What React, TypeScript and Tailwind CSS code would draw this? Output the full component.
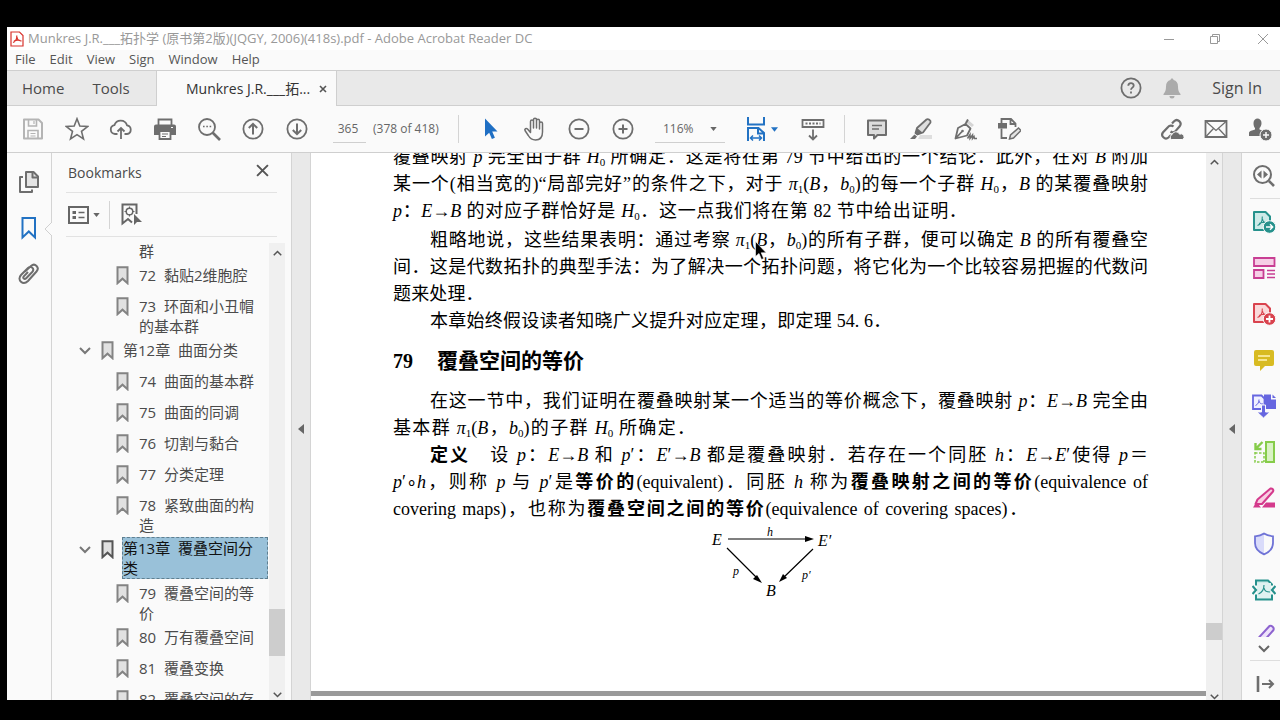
import React from 'react';

type IconProps = {
  children: React.ReactNode;
  className?: string;
};

const Icon = ({ children, className = 'size-6 text-[#6e6e6e]' }: IconProps) => (
  <svg viewBox="0 0 24 24" fill="none" stroke="currentColor" strokeWidth="2" className={`shrink-0 ${className}`} aria-hidden="true">
    {children}
  </svg>
);

const fileTools = [
  {
    label: 'Save file',
    icon: (
      <Icon className="size-6 text-[#b4b4b4]">
        <path d="M3 2.5h14.5L21 6v15.5H3z" strokeLinejoin="round" />
        <path d="M7.5 3v6h8V3M7 21v-7.5h10V21" strokeWidth="1.6" />
        <path d="M13 4v3M9.5 16.5h5M9.5 19h5" strokeWidth="1.2" />
      </Icon>
    ),
  },
  {
    label: 'Star file',
    icon: (
      <Icon>
        <path d="M12 1.8l2.8 7.3 7.8.4-6.1 4.9 2 7.6L12 17.7 5.5 22l2-7.6L1.4 9.5l7.8-.4z" strokeWidth="1.6" />
      </Icon>
    ),
  },
  {
    label: 'Upload',
    icon: (
      <Icon>
        <path d="M8.5 17H6a4.5 4.5 0 0 1-.6-8.9A6.6 6.6 0 0 1 18 8.3 4.4 4.4 0 0 1 18 17h-2.5" strokeWidth="1.8" />
        <path d="M12 22V11M8.500 14.500 12 11l3.500 3.500" strokeWidth="1.8" />
      </Icon>
    ),
  },
  {
    label: 'Print',
    icon: (
      <Icon>
        <path d="M5.500 8V2.500h13V8" strokeWidth="1.8" />
        <path d="M3 7.500h18A2 2 0 0 1 23 9.500V18h-5v-4H6v4H1V9.500A2 2 0 0 1 3 7.500z" fill="currentColor" stroke="none" />
        <path d="M6.500 14h11v8h-11z" strokeWidth="1.8" />
        <path d="M9 17h6M9 19.500h4" strokeWidth="1.2" />
        <path d="M18 10.500h2" stroke="#fafafa" strokeWidth="1.2" />
      </Icon>
    ),
  },
  {
    label: 'Find text',
    icon: (
      <Icon>
        <circle cx="10" cy="10" r="8" strokeWidth="1.8" />
        <path d="M15.500 15.500 23 23" strokeWidth="2.6" />
        <path d="M6 9.500h1.600M9.300 9.500h1.600M12.600 9.500h1.600" strokeWidth="1.6" />
      </Icon>
    ),
  },
  {
    label: 'Previous page',
    icon: (
      <Icon>
        <circle cx="12" cy="12" r="9.6" strokeWidth="1.8" />
        <path d="M12 17.500V7M7.800 11 12 6.800l4.200 4.200" />
      </Icon>
    ),
  },
  {
    label: 'Next page',
    icon: (
      <Icon>
        <circle cx="12" cy="12" r="9.6" strokeWidth="1.8" />
        <path d="M12 6.500V17M7.800 13l4.200 4.200 4.200-4.200" />
      </Icon>
    ),
  },
];

const viewTools = [
  {
    label: 'Select',
    icon: (
      <Icon className="size-6 text-[#1f6fc4]">
        <path d="M6 1.500v18l4.200-3.800 2.700 6.300 3-1.300-2.700-6.100h5.300z" fill="currentColor" stroke="none" />
      </Icon>
    ),
  },
  {
    label: 'Pan',
    icon: (
      <Icon>
        <path
          d="M7.500 13V4.500a1.500 1.500 0 0 1 3 0V11 2.700a1.500 1.500 0 0 1 3 0V11 3.700a1.500 1.500 0 0 1 3 0V12 6.500a1.500 1.500 0 0 1 3 0V15c0 5-2.500 8-7 8-3.500 0-5.500-1.500-7.200-4.500L2 13.500c-.8-1.500 1.300-2.700 2.500-1.500l3 3.500z"
          strokeWidth="1.5"
          strokeLinejoin="round"
        />
      </Icon>
    ),
  },
  {
    label: 'Zoom out',
    icon: (
      <Icon>
        <circle cx="12" cy="12" r="9.6" strokeWidth="1.8" />
        <path d="M7.500 12h9" />
      </Icon>
    ),
  },
  {
    label: 'Zoom in',
    icon: (
      <Icon>
        <circle cx="12" cy="12" r="9.6" strokeWidth="1.8" />
        <path d="M7.500 12h9M12 7.500v9" />
      </Icon>
    ),
  },
];

const commentTools = [
  {
    label: 'Add comment',
    icon: (
      <Icon>
        <path d="M3 3.500h18V18h-8.500L9 21.500V18H3z" fill="#dcdcdc" strokeLinejoin="round" />
        <path d="M7 8.500h10M7 12h7" strokeWidth="1.5" />
      </Icon>
    ),
  },
  {
    label: 'Highlight',
    icon: (
      <Icon>
        <path d="M11 18h12v4H9z" fill="#dedede" stroke="none" />
        <path d="M17.500 2.500c1.500-1.200 4.700 1 4 3L14 15.500l-5.500 2-2-1.500 1.500-5z" fill="#dedede" strokeLinejoin="round" strokeWidth="1.8" />
        <path d="M8 11l5.500 4.500-5 2.500-2-1.500z" fill="currentColor" stroke="none" />
        <path d="M5.500 17.500 1 22h5l2-2.500z" fill="currentColor" stroke="none" />
      </Icon>
    ),
  },
  {
    label: 'Sign document',
    icon: (
      <Icon>
        <path d="m14 2 7 6-2 2-7-5z" fill="#d5d5d5" stroke="none" />
        <path d="M2.500 21.500 5 11l7.500-4 5 4.500-3.500 7z M2.500 21.500l6.500-7 M12.500 7 15 2.500" strokeWidth="1.8" strokeLinejoin="round" />
        <circle cx="9.5" cy="14" r="1.3" fill="currentColor" stroke="none" />
        <path d="m14.500 21.500 2.500-4v4l2.500-3.500v3.500l1.500-2 .5 2H24" strokeWidth="1.5" />
      </Icon>
    ),
  },
  {
    label: 'Edit PDF',
    icon: (
      <Icon>
        <path d="M1 6h9v5.500H1z" fill="currentColor" stroke="none" />
        <path d="M4.500 6V2H14l4.500 4.500V10M13.500 2v5h5M4.500 11.500V21H10" strokeWidth="1.8" />
        <path d="m12.500 22 1-4 8-7 2.500 2.500-7.500 7.500z" strokeWidth="1.5" fill="#e3e3e3" />
      </Icon>
    ),
  },
];

const shareTools = [
  {
    label: 'Share link',
    icon: (
      <Icon>
        <path
          d="M10.500 14.500a3.800 3.800 0 0 0 5.200-.6l4-4.600a3.800 3.800 0 0 0-5.600-5.100L12 6.500M13.500 9.500a3.800 3.800 0 0 0-5.400.4l-5 5.300A3.800 3.800 0 0 0 8.500 20.500l2.500-2.500"
          strokeWidth="2.2"
        />
        <path d="M11.500 22.500a2.800 2.800 0 0 1 .6-5 4 4 0 0 1 7.500-.3 2.700 2.700 0 0 1 2.900 5.300z" fill="currentColor" stroke="#fafafa" strokeWidth="1" />
      </Icon>
    ),
  },
  {
    label: 'Send by email',
    icon: (
      <Icon>
        <path d="M1.500 4h21v16h-21z" strokeWidth="1.8" />
        <path d="m2 4.500 10 9 10-9M2 19.500l7.500-8M22 19.500l-7.500-8" strokeWidth="1.3" />
      </Icon>
    ),
  },
  {
    label: 'Add people',
    icon: (
      <Icon>
        <path d="M5.500 6c0-6 8-6 8 0 0 2.500-1 4-2 5v1.500c3 1 4.500 1.700 5 3V19H1v-3.500c.5-1.500 3-2 6-3V11c-1-1-1.500-2.500-1.500-5z" fill="currentColor" stroke="none" />
        <circle cx="18" cy="18" r="6" fill="currentColor" stroke="#fafafa" strokeWidth="1" />
        <path d="M15 18h6M18 15v6" stroke="#fafafa" strokeWidth="1.5" />
      </Icon>
    ),
  },
];

const Acrobat = () => <path d="M5.500 15.500c3-1 5-4 4.800-9M10.500 9c.5 3 2.500 4.500 6 4.300M7 13.500c3-1.300 5-1.500 7.500-1" strokeWidth="1.1" />;

const sideTools = [
  {
    label: 'Export PDF',
    icon: (
      <Icon className="size-6 text-[#26918c]">
        <path d="M2 2h11.500L18 6.500V20H2z" fill="#cdeae8" strokeLinejoin="round" />
        <Acrobat />
        <circle cx="17.5" cy="17" r="6.3" fill="currentColor" stroke="#fafafa" strokeWidth="1" />
        <path d="M14 17h6.500M18 14.300l2.700 2.700-2.700 2.700" stroke="#fff" strokeWidth="1.4" />
      </Icon>
    ),
  },
  {
    label: 'Organize Pages',
    icon: (
      <Icon className="size-6 text-[#c83e93]">
        <path d="M2 2h20.500v8H2zM2 14h9.500v8H2z" fill="#f6cfe6" strokeWidth="1.8" />
        <path d="M15 14.500h8M15 18h8M15 21.500h8" strokeWidth="1.5" />
      </Icon>
    ),
  },
  {
    label: 'Create PDF',
    icon: (
      <Icon className="size-6 text-[#d9434e]">
        <path d="M2 2h11.500L18 6.500V20H2z" fill="#fad9da" strokeLinejoin="round" />
        <Acrobat />
        <circle cx="17.5" cy="17" r="6.3" fill="currentColor" stroke="#fafafa" strokeWidth="1" />
        <path d="M14 17h7M17.500 13.500v7" stroke="#fff" strokeWidth="1.8" />
      </Icon>
    ),
  },
  {
    label: 'Comment',
    icon: (
      <Icon className="size-6 text-[#d8bb22]">
        <path d="M2 4a2 2 0 0 1 2-2h16a2 2 0 0 1 2 2v12a2 2 0 0 1-2 2h-7l-5 5v-5H4a2 2 0 0 1-2-2z" fill="currentColor" stroke="none" />
        <path d="M6 8h12M6 12h9" stroke="#fff5b8" strokeWidth="1.6" />
      </Icon>
    ),
  },
  {
    label: 'Combine Files',
    icon: (
      <Icon className="size-6 text-[#6666e0]">
        <path d="M12 .5h7v5h5V15H12z" fill="currentColor" stroke="none" />
        <path d="M20.500.5 24 4h-3.500z" fill="currentColor" stroke="none" />
        <path d="M1 1.500h8.500L12.500 4.500V15H1z" fill="#f0f0ff" strokeWidth="1.8" />
        <path d="M3.500 11.500c2.500-1 3.500-3.500 3.500-6M7 7c.5 2 1.500 3 4 3" strokeWidth="1" />
        <path d="M9.500 11h4v7h4.500L11.500 24 5 18h4.500z" fill="currentColor" stroke="#fafafa" strokeWidth="1" />
      </Icon>
    ),
  },
  {
    label: 'Compress pages',
    icon: (
      <Icon className="size-6 text-[#86cc4a]">
        <path d="M14 2h8v20h-8z" fill="#d9f2c4" />
        <path d="M10.500 2 4 8.500M3.500 3v6h6" strokeWidth="2.4" />
        <path d="M3 12v10h9M3 13h9V22" strokeDasharray="2.5 1.5" strokeWidth="1.5" />
      </Icon>
    ),
  },
  {
    label: 'Redact',
    icon: (
      <Icon className="size-6 text-[#d43a8c]">
        <path d="M18.500 2.500c1.800-.5 3.500 1.500 2.500 3L10 18H3.500l2-4.500z" fill="#f9cfe3" strokeLinejoin="round" />
        <path d="M1 21.500 4.500 16l4.500 5.500zM10 21.500 14 16.500h9v5z" fill="currentColor" stroke="none" />
      </Icon>
    ),
  },
  {
    label: 'Protect',
    icon: (
      <Icon className="size-6 text-[#6f73d6]">
        <path d="M12 2v20C6 19.500 3 16.500 3 11V4.500z" fill="#d9dbfa" stroke="none" />
        <path d="M12 1.500c2.500 1.800 5.500 2.500 9 2.800V11c0 5.500-3.500 9-9 11.300C6.500 20 3 16.500 3 11V4.300c3.500-.3 6.500-1 9-2.800z" strokeWidth="1.8" />
      </Icon>
    ),
  },
  {
    label: 'Optimize PDF',
    icon: (
      <Icon className="size-6 text-[#26918c]">
        <path d="M4 7.500V2.500h12l4 4v1M4 16.500v5h16v-5" fill="#cdeae8" />
        <path d="M5 5h14v15H5z" fill="#dff1f0" stroke="none" />
        <path d="M6.500 16c3.500-1.500 5.500-4.500 5.500-9M12 10c.5 3 2.500 4 6 4" strokeWidth="1.2" />
        <path d="m.5 8 3.500 4-3.500 4M23.500 8 20 12l3.500 4" strokeWidth="2.2" />
      </Icon>
    ),
  },
  {
    label: 'Fill and Sign',
    icon: (
      <Icon className="size-6 text-[#8d63cf]">
        <path d="M17.500 2c2-.8 5 1.500 4 4L10 19l-6 2 2-6.500z" fill="#eee2fb" strokeLinejoin="round" />
      </Icon>
    ),
  },
];

const bookmarks = [
  { title: '72\u00a0 黏贴2维胞腔' },
  { title: '73\u00a0 环面和小丑帽的基本群' },
  { title: '第12章\u00a0 曲面分类', chapter: true },
  { title: '74\u00a0 曲面的基本群' },
  { title: '75\u00a0 曲面的同调' },
  { title: '76\u00a0 切割与黏合' },
  { title: '77\u00a0 分类定理' },
  { title: '78\u00a0 紧致曲面的构造' },
  { title: '第13章\u00a0 覆叠空间分类', chapter: true, selected: true },
  { title: '79\u00a0 覆叠空间的等价' },
  { title: '80\u00a0 万有覆叠空间' },
  { title: '81\u00a0 覆叠变换' },
  { title: '82\u00a0 覆叠空间的存在性' },
];

const ToolButton = ({ label, children }: { label: string; children: React.ReactNode }) => (
  <button type="button" aria-label={label} className="flex h-full w-11 items-center justify-center">
    {children}
  </button>
);

const Caret = ({ className }: { className: string }) => (
  <svg viewBox="0 0 8 5" fill="currentColor" className={className} aria-hidden="true">
    <path d="M0 0h8L4 5z" />
  </svg>
);

const Chevron = ({ className, up = false }: { className: string; up?: boolean }) => (
  <svg viewBox="0 0 12 8" fill="none" stroke="currentColor" strokeWidth="2" className={className} aria-hidden="true">
    <path d={up ? 'M1 7l5-5 5 5' : 'M1 1l5 5 5-5'} />
  </svg>
);

const Collapse = ({ label }: { label: string }) => (
  <button type="button" aria-label={label} className="flex w-5 shrink-0 items-center justify-center border-x border-[#d4d4d4] bg-[#e9e9e9] pt-[5px] text-[#666]">
    <svg viewBox="0 0 6 10" fill="currentColor" className="h-[10px] w-[6px]" aria-hidden="true">
      <path d="M6 0v10L0 5z" />
    </svg>
  </button>
);

const I = ({ children }: { children: React.ReactNode }) => <i>{children}</i>;
const Sub = ({ n }: { n: number }) => <sub className="text-[11px]">{n}</sub>;

type LineProps = {
  children: React.ReactNode;
  width?: string;
  indent?: boolean;
};

// One typeset line of the book page, spread over its measure
const Line = ({ children, width = 'w-full', indent = false }: LineProps) => (
  <span className={`block text-justify whitespace-nowrap [text-align-last:justify] ${width} ${indent ? 'pl-[37px]' : ''}`}>{children}</span>
);

const TitleBar = () => (
  <header>
    <div className="flex h-[23px] items-center bg-white pl-[3px] text-[#999]">
      <svg viewBox="0 0 14 16" className="mr-[4px] h-4 w-[14px] shrink-0" aria-hidden="true">
        <path d="M1 1h8.500L13 4.500V15H1z" fill="#fff" stroke="#d8322c" strokeWidth="1.2" />
        <path d="M3 11.500c2.500-1 4-3.500 3.800-7M7 6c.3 2.500 1.800 4 4.500 3.800M4 10c2-1 4-1.200 6-.6" fill="none" stroke="#d8322c" strokeWidth="1.2" />
      </svg>
      <span className="text-[13px] whitespace-nowrap">Munkres J.R.___拓扑学 (原书第2版)(JQGY, 2006)(418s).pdf - Adobe Acrobat Reader DC</span>
      <div className="ml-auto flex pr-[5px] text-[#999]">
        <button type="button" aria-label="Minimize" className="flex w-[46px] justify-center pr-[6px]">
          <svg viewBox="0 0 12 12" fill="none" stroke="currentColor" className="size-3"><path d="M1 6.500h10" /></svg>
        </button>
        <button type="button" aria-label="Restore" className="flex w-[46px] justify-center pr-[6px]">
          <svg viewBox="0 0 12 12" fill="none" stroke="currentColor" className="size-3"><path d="M1.500 3.500h7v7h-7zM3.500 3.500v-2h7v7h-2" /></svg>
        </button>
        <button type="button" aria-label="Close" className="flex w-[34px] justify-center pl-[10px]">
          <svg viewBox="0 0 12 12" fill="none" stroke="currentColor" className="size-3"><path d="M1 1l10 10M11 1 1 11" /></svg>
        </button>
      </div>
    </div>
    <nav className="flex h-5 items-center gap-[14px] bg-[#fafafa] pl-[8px] text-[13px] text-[#555]">
      {['File', 'Edit', 'View', 'Sign', 'Window', 'Help'].map((item) => (
        <button type="button" key={item}>{item}</button>
      ))}
    </nav>
  </header>
);

const TabBar = () => (
  <div className="flex h-9 border-y border-[#cfcfcf] bg-[#e9e9e9] text-[15px] text-[#4b4b4b]">
    <div className="flex w-[149px] items-center gap-[28px] pl-[15px]">
      <button type="button">Home</button>
      <button type="button">Tools</button>
    </div>
    <div className="-mb-px flex w-[181px] items-center border-x border-[#cfcfcf] bg-[#fafafa] pl-[29px] text-[14px] text-[#333]">
      <span className="whitespace-nowrap">Munkres J.R.___拓...</span>
      <button type="button" aria-label="Close tab" className="mr-[9px] ml-auto">
        <svg viewBox="0 0 8 8" fill="none" stroke="#555" strokeWidth="1.6" className="size-[8px]"><path d="M1 1l6 6M7 1 1 7" /></svg>
      </button>
    </div>
    <div className="ml-auto flex items-center pr-[18px]">
      <button type="button" aria-label="Help">
        <Icon>
          <circle cx="12" cy="12" r="9.6" strokeWidth="1.8" />
          <path d="M9.300 9.800c0-3.500 5.400-3.500 5.400-.3 0 2-2.700 2.200-2.700 4.300M12 15.500v2" strokeWidth="1.8" />
        </Icon>
      </button>
      <button type="button" aria-label="Notifications" className="ml-[17px]">
        <Icon className="size-6 text-[#ababab]">
          <path d="M12 2.500c1 0 1.500.6 1.500 1.500 3 .8 4.500 3 4.500 6.500 0 4 .8 5.500 2.500 7.500v1h-17v-1C5.200 16 6 14.500 6 10.500 6 7 7.500 4.800 10.500 4c0-.9.500-1.500 1.500-1.500zM9.500 20h5a2.500 2.500 0 0 1-5 0z" fill="currentColor" stroke="none" />
        </Icon>
      </button>
      <button type="button" className="ml-[28px] text-[16px] whitespace-nowrap">Sign In</button>
    </div>
  </div>
);

const Toolbar = () => (
  <div className="flex h-[47px] items-center border-b border-[#cfcfcf] bg-[#fafafa] pl-[4px] text-[12px] text-[#666]">
    {fileTools.map((tool) => (
      <ToolButton key={tool.label} label={tool.label}>{tool.icon}</ToolButton>
    ))}
    <input aria-label="Page number" defaultValue="365" className="ml-[14px] h-7 w-[33px] border-b border-[#cfcfcf] pr-[3px] text-center" />
    <span className="ml-[7px] w-[85px] whitespace-nowrap">(378 of 418)</span>
    <div className="mr-[10px] h-7 w-px bg-[#d4d4d4]" />
    {viewTools.map((tool) => (
      <ToolButton key={tool.label} label={tool.label}>{tool.icon}</ToolButton>
    ))}
    <div className="relative ml-[10px]">
      <select aria-label="Zoom level" className="h-7 w-[70px] appearance-none border-b border-[#cfcfcf] pl-[8px]">
        <option>116%</option>
      </select>
      <Caret className="pointer-events-none absolute top-[12px] right-[8px] h-[4px] w-[7px]" />
    </div>
    <button type="button" aria-label="Fit width" className="ml-[19px] flex h-full items-center gap-[3px] text-[#2272c3]">
      <Icon className="size-6">
        <path d="M4 0v7.500h16V0M4 24V11h10.500L20 16v8M14 11v5.500h6" />
        <path d="M6.500 21h11M9 18.500 6.500 21 9 23.500M15 18.500l2.500 2.500-2.500 2.500" strokeWidth="1.5" />
      </Icon>
      <Caret className="h-[5px] w-[7px]" />
    </button>
    <div className="ml-[13px] flex h-full">
      <ToolButton label="Scrolling mode">
        <Icon>
          <path d="M1.500 3h21v7h-21z" strokeWidth="1.8" />
          <path d="M4.500 6.500h15" strokeDasharray="2 1.5" strokeWidth="1.8" />
          <path d="M12 12.500V22M8 18.500l4 4 4-4" strokeWidth="1.8" />
        </Icon>
      </ToolButton>
    </div>
    <div className="mr-[10px] ml-[9px] h-7 w-px bg-[#d4d4d4]" />
    {commentTools.map((tool) => (
      <ToolButton key={tool.label} label={tool.label}>{tool.icon}</ToolButton>
    ))}
    <div className="-mr-[2px] ml-auto flex h-full">
      {shareTools.map((tool) => (
        <ToolButton key={tool.label} label={tool.label}>{tool.icon}</ToolButton>
      ))}
    </div>
  </div>
);

const NavRail = () => (
  <nav className="flex w-[45px] shrink-0 flex-col items-center border-r border-[#d4d4d4] bg-[#fafafa] pt-[6px]">
    <button type="button" aria-label="Page thumbnails" className="flex h-[46px] items-center">
      <Icon>
        <path d="M9 2h7.500L21 6.500V17H9z" fill="#e4e4e4" strokeLinejoin="round" />
        <path d="M15.500 2.500v5H21M6 7H3v15h12v-2.500" strokeLinejoin="round" />
      </Icon>
    </button>
    <button type="button" aria-label="Bookmarks" className="flex h-[46px] items-center">
      <Icon className="size-6 text-[#2272c3]">
        <path d="M5.500 2h12.500v19.500l-6.200-6-6.300 6z" />
      </Icon>
    </button>
    <button type="button" aria-label="Attachments" className="flex h-[46px] items-center">
      <Icon>
        <path d="M8 9.500 14 4c4-3.500 9 1.500 5.500 5.500l-8.500 9.500c-5 5-11.500-1-7-6l7-7c3-3 7 .8 4.200 4l-6 6.200c-1.800 1.800-3.800-.2-2.400-1.900l4.200-4.300" />
      </Icon>
    </button>
  </nav>
);

const BookmarkIcon = ({ active = false }: { active?: boolean }) => (
  <svg viewBox="0 0 13 19" className={`mt-[3px] h-[19px] w-[13px] shrink-0 ${active ? 'text-[#555]' : 'text-[#838383]'}`} aria-hidden="true">
    <path d="M1.500 1.200h10v16l-5-4.500-5 4.500z" fill="#e1e1e1" stroke="currentColor" strokeWidth="2" />
  </svg>
);

const BookmarksPanel = () => (
  <aside className="relative flex w-[239px] shrink-0 flex-col bg-[#fafafa] text-[#4b4b4b]">
    <svg viewBox="0 0 8 14" className="absolute top-[69px] -left-[8px] h-[14px] w-[8px]" aria-hidden="true">
      <path d="M8 0 1 7l7 7" fill="#fafafa" stroke="#d0d0d0" />
    </svg>
    <div className="mx-[14px] flex h-[40px] items-center justify-between border-b border-[#e2e2e2] pr-[8px] pl-[2px]">
      <h2 className="text-[14px]">Bookmarks</h2>
      <button type="button" aria-label="Close panel" className="-mt-[4px]">
        <svg viewBox="0 0 12 12" fill="none" stroke="#555" strokeWidth="1.8" className="size-[13px]"><path d="M1 1l10 10M11 1 1 11" /></svg>
      </button>
    </div>
    <div className="mx-[14px] flex h-[44px] items-center border-b border-[#e2e2e2] pl-[2px] text-[#666]">
      <button type="button" aria-label="Options" className="flex items-center gap-[4px]">
        <svg viewBox="0 0 21 18" fill="none" stroke="currentColor" strokeWidth="2" className="h-[18px] w-[21px]">
          <path d="M1 1h19v16H1z" />
          <path d="M4.500 6.500h3.500M4.500 11.500h3.500" strokeWidth="3" />
          <path d="M10.500 6.500h6M10.500 11.500h6" strokeWidth="1.5" />
        </svg>
        <Caret className="h-[4px] w-[7px]" />
      </button>
      <div className="mr-[11px] ml-[9px] h-7 w-px bg-[#d4d4d4]" />
      <button type="button" aria-label="Find current bookmark">
        <svg viewBox="0 0 21 23" fill="none" stroke="currentColor" strokeWidth="2" className="h-[23px] w-[21px]">
          <path d="M15.500 11V1.500h-14v19l5.500-4.500 4 3.500" />
          <circle cx="8.5" cy="8.5" r="3.3" strokeWidth="1.5" />
          <path d="M8.500 3.500V6M8.500 11v2.500M3.500 8.500H6M11 8.500h2.500" strokeWidth="1.2" />
          <path d="M13 11v11l3-3h5z" fill="currentColor" stroke="none" />
        </svg>
      </button>
    </div>
    <div className="flex min-h-0 flex-1">
      <ul className="min-w-0 flex-1 overflow-hidden pt-[4px] text-[15px] leading-[20px]">
        <li className="pb-[2px] pl-[87px]"><a href="#71">群</a></li>
        {bookmarks.map((item) => (
          <li key={item.title} className={`flex min-h-[31px] ${item.chapter ? 'pl-[27px]' : 'pl-[64px]'}`}>
            {item.chapter && (
              <button type="button" aria-label="Toggle chapter" className="mt-[9px] mr-[10px] h-[8px] w-[12px] shrink-0">
                <Chevron className="h-[8px] w-[12px] text-[#777]" />
              </button>
            )}
            <BookmarkIcon active={item.selected} />
            <a
              href="#page"
              className={
                item.selected
                  ? 'mb-[2px] ml-[8px] w-[146px] border border-dashed border-[#5f7f90] bg-[#99c1d9] text-[#111]'
                  : `pt-[2px] pb-[2px] ${item.chapter ? 'ml-[9px]' : 'ml-[10px] w-[128px]'}`
              }
            >
              {item.title}
            </a>
          </li>
        ))}
      </ul>
      <div className="mt-[6px] mr-[6px] flex w-4 shrink-0 flex-col items-center bg-[#f0f0f0] pt-[7px] text-[#555]">
        <Chevron up className="h-[6px] w-[9px]" />
        <div className="flex-1" />
        <div className="h-[47px] w-full bg-[#cdcdcd]" />
        <Chevron className="mt-[36px] mb-[2px] h-[6px] w-[9px]" />
      </div>
    </div>
  </aside>
);

const Diagram = () => (
  <svg viewBox="0 0 130 80" className="mt-[3px] ml-[318px] h-[80px] w-[130px] font-['Liberation_Serif',serif] text-[16px] italic" fill="#000">
    <text x="1" y="19">E</text>
    <text x="107" y="20">E′</text>
    <text x="55" y="70">B</text>
    <text x="56" y="10" fontSize="12">h</text>
    <text x="22" y="49" fontSize="12">p</text>
    <text x="91" y="53" fontSize="12">p′</text>
    <path d="M17 13h80M16 22l30 30M102 23 72 52" stroke="#000" strokeWidth="1.2" fill="none" />
    <path d="M103 13l-9-3v6zM51 57l-9-4 4-4zM68 56l4-8 4 4z" />
  </svg>
);

const BookPage = () => (
  <main className="flex min-w-0 flex-1 flex-col overflow-hidden bg-white">
    <article
      lang="zh-CN"
      className="relative -mt-[9px] min-h-0 flex-1 pr-[58px] pl-[82px] font-['Liberation_Serif','Noto_Sans_CJK_SC',serif] text-[18px] leading-[27px] text-black"
    >
      <p>
        <Line>覆叠映射 <I>p</I> 完全由子群 <I>H</I><Sub n={0} /> 所确定．这是将在第 79 节中给出的一个结论．此外，在对 <I>B</I> 附加</Line>
        <Line>某一个(相当宽的)“局部完好”的条件之下，对于 <I>π</I><Sub n={1} />(<I>B</I>，<I>b</I><Sub n={0} />)的每一个子群 <I>H</I><Sub n={0} />，<I>B</I> 的某覆叠映射</Line>
        <Line width="w-[76%]"><I>p</I>：<I>E</I>→<I>B</I> 的对应子群恰好是 <I>H</I><Sub n={0} />．这一点我们将在第 82 节中给出证明．</Line>
      </p>
      <p className="mt-[2px]">
        <Line indent>粗略地说，这些结果表明：通过考察 <I>π</I><Sub n={1} />(<I>B</I>，<I>b</I><Sub n={0} />)的所有子群，便可以确定 <I>B</I> 的所有覆叠空</Line>
        <Line>间．这是代数拓扑的典型手法：为了解决一个拓扑问题，将它化为一个比较容易把握的代数问</Line>
        <Line width="w-[12%]">题来处理．</Line>
      </p>
      <p>
        <Line width="w-[66%]" indent>本章始终假设读者知晓广义提升对应定理，即定理 54. 6．</Line>
      </p>
      <h2 className="my-[13px] flex gap-[24px] text-[21px] font-bold">
        <span className="text-[20px]">79</span>
        <span>覆叠空间的等价</span>
      </h2>
      <p>
        <Line indent>在这一节中，我们证明在覆叠映射某一个适当的等价概念下，覆叠映射 <I>p</I>：<I>E</I>→<I>B</I> 完全由</Line>
        <Line width="w-[40%]">基本群 <I>π</I><Sub n={1} />(<I>B</I>，<I>b</I><Sub n={0} />)的子群 <I>H</I><Sub n={0} /> 所确定．</Line>
      </p>
      <p>
        <Line indent><b>定义</b>　设 <I>p</I>：<I>E</I>→<I>B</I> 和 <I>p</I>′：<I>E</I>′→<I>B</I> 都是覆叠映射．若存在一个同胚 <I>h</I>：<I>E</I>→<I>E</I>′使得 <I>p</I>＝</Line>
        <Line><I>p</I>′∘<I>h</I>，则称 <I>p</I> 与 <I>p</I>′是<b>等价的</b>(equivalent)．同胚 <I>h</I> 称为<b>覆叠映射之间的等价</b>(equivalence of</Line>
        <Line width="w-[84%]">covering maps)，也称为<b>覆叠空间之间的等价</b>(equivalence of covering spaces)．</Line>
      </p>
      <Diagram />
      <svg viewBox="0 0 12 19" className="absolute top-[97px] left-[444px] h-[19px] w-[12px]" aria-hidden="true">
        <path d="M.5.5v15l3.500-3 2.500 6 2.200-1-2.500-5.700h5z" fill="#000" stroke="#fff" strokeWidth=".6" />
      </svg>
    </article>
    <div className="mb-[4px] h-[5px] shrink-0 bg-[#9a9a9a]" />
  </main>
);

const ToolsRail = () => (
  <aside className="flex w-[38px] shrink-0 flex-col bg-[#fafafa] pl-[4px]">
    <button type="button" aria-label="Search tools" className="flex h-[45px] shrink-0 items-center pl-[6px]">
      <Icon>
        <circle cx="10.5" cy="10.5" r="8.5" />
        <path d="M17 17l5 5" strokeWidth="2.6" />
        <path d="M9.500 6.500v8L5 10.500zM11.500 6.500v8l4.500-4z" fill="currentColor" stroke="none" />
      </Icon>
    </button>
    <div className="ml-[4px] h-px shrink-0 bg-[#dedede]" />
    <div className="min-h-0 flex-1 overflow-hidden">
      {sideTools.map((tool) => (
        <button type="button" key={tool.label} aria-label={tool.label} className="flex h-[46px] w-full items-center pl-[6px]">
          {tool.icon}
        </button>
      ))}
    </div>
    <button type="button" aria-label="More tools" className="flex h-[23px] shrink-0 items-center justify-center pl-[2px]">
      <Chevron className="h-[8px] w-[12px] text-[#666]" />
    </button>
    <div className="ml-[4px] h-px shrink-0 bg-[#dedede]" />
    <button type="button" aria-label="Collapse tools" className="flex h-[39px] shrink-0 items-center pt-[6px] pl-[6px]">
      <Icon>
        <path d="M6 4v16" strokeWidth="2.6" />
        <path d="M10 12h11M17 8l4 4-4 4" />
      </Icon>
    </button>
  </aside>
);

export default function App() {
  return (
    <div className="h-screen bg-black pt-[27px] pb-[20px] pl-[7px] font-['Open_Sans','Noto_Sans_CJK_SC',sans-serif]">
      <div className="flex h-full flex-col overflow-hidden bg-[#fafafa]">
        <TitleBar />
        <TabBar />
        <Toolbar />
        <div className="flex min-h-0 flex-1">
          <NavRail />
          <BookmarksPanel />
          <Collapse label="Hide navigation pane" />
          <BookPage />
          <div className="flex w-4 shrink-0 flex-col items-center bg-[#f0f0f0] pt-[6px] text-[#555]">
            <Chevron up className="h-[6px] w-[9px]" />
            <div className="flex-1" />
            <div className="h-[17px] w-full bg-[#cdcdcd]" />
            <Chevron className="mt-[54px] h-[6px] w-[9px]" />
          </div>
          <Collapse label="Hide tools pane" />
          <ToolsRail />
        </div>
      </div>
    </div>
  );
}
